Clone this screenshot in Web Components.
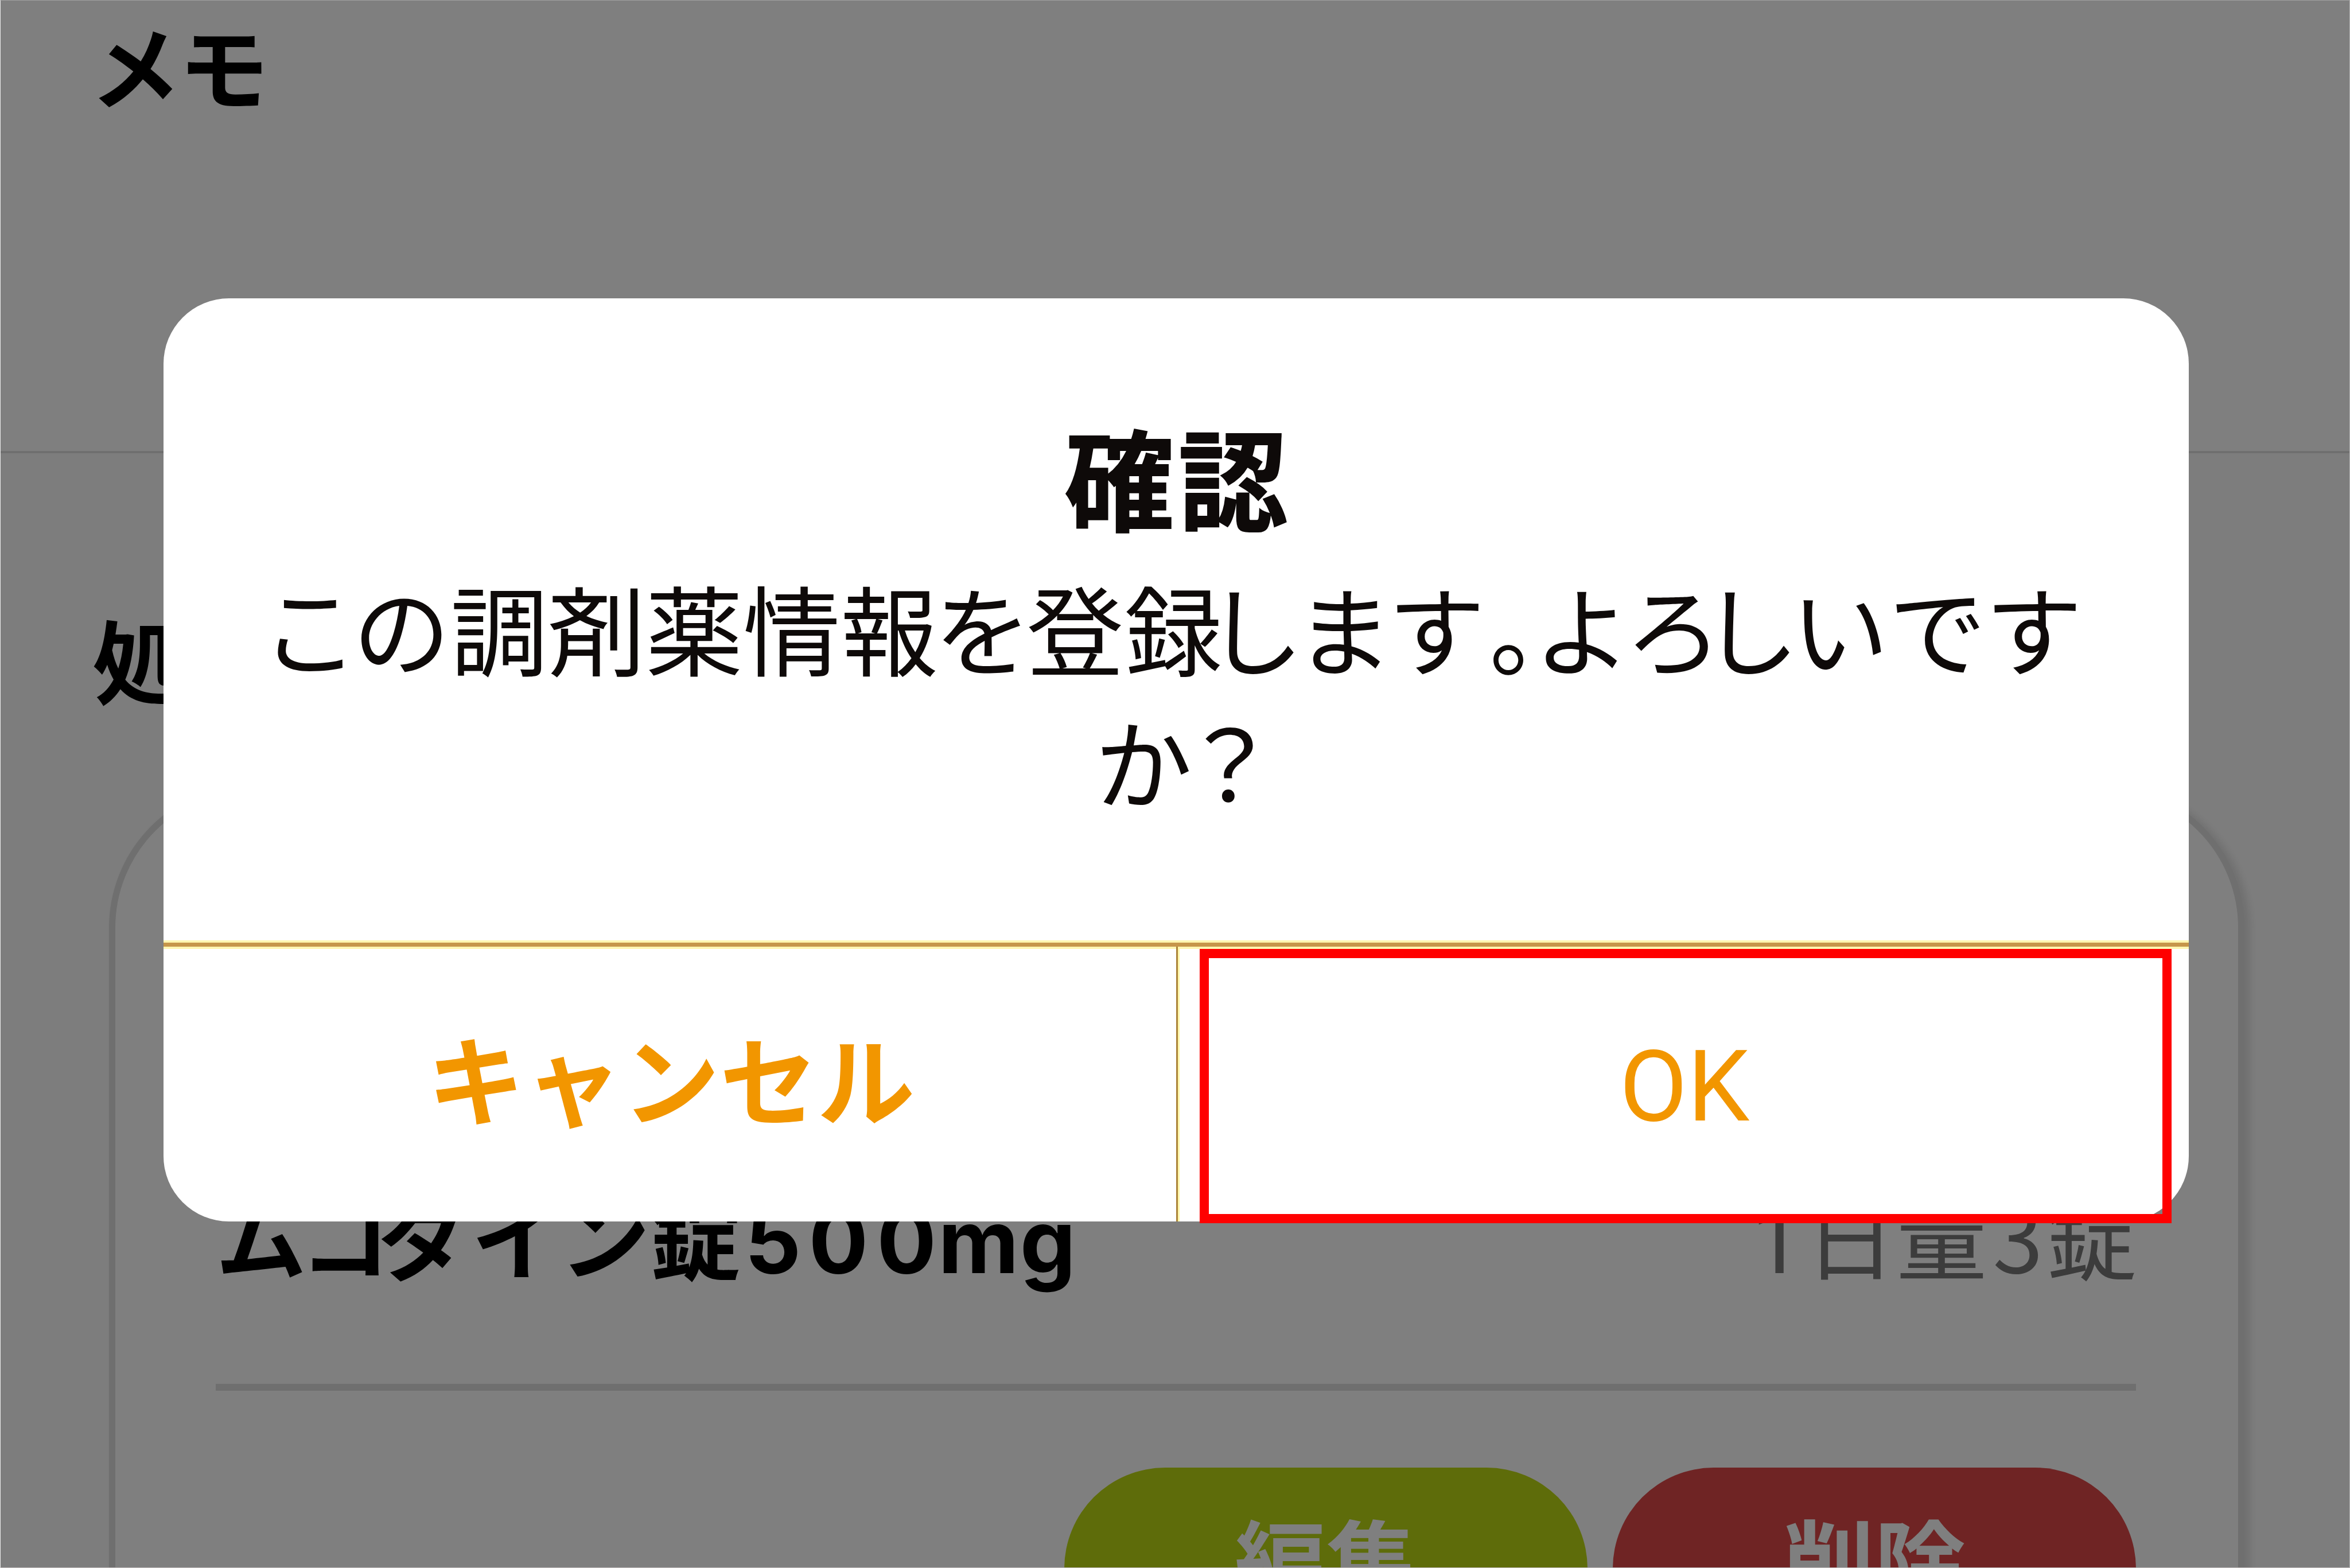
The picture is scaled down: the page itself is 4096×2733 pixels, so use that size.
<!DOCTYPE html>
<html lang="ja">
<head>
    <meta charset="utf-8">
    <title>確認</title>
    <style>
        body {
            margin: 0;
            font-family: "Noto Sans CJK JP", sans-serif;
            color: #000;
        }

        .latin {
            font-family: Inter, sans-serif;
            font-size: 154px;
            font-weight: 650;
        }
    </style>
</head>
<body>
    <prescription-screen>
        <form-section>
            <section-title slot="title"><kern-run by="-4">メ</kern-run>モ</section-title>
        </form-section>
        <form-section shaded>
            <section-title slot="title" style="--indent: 161px">処</section-title>
            <medicine-card>
                <span slot="name"><kern-run by="-12">ム</kern-run><kern-run by="-21">コ</kern-run><kern-run by="5">ダ</kern-run><kern-run by="-5">イ</kern-run>ン<kern-run by="7">錠</kern-run><span class="latin"><kern-run by="13">5</kern-run><kern-run by="15">0</kern-run><kern-run by="3">0</kern-run><kern-run by="2">m</kern-run>g</span></span>
                <span slot="dose"><kern-run by="5" style="font-family: Roboto, sans-serif">1</kern-run><kern-run by="1">日</kern-run><kern-run by="10">量</kern-run><kern-run by="6">3</kern-run>錠</span>
                <pill-button slot="actions" style="--fill: #bcd814">編集</pill-button>
                <pill-button slot="actions" style="--fill: #de4848">削除</pill-button>
            </medicine-card>
        </form-section>
        <confirm-dialog slot="overlay">
            <span slot="title"><kern-run by="7">確</kern-run>認</span>
            <div slot="message" style="padding-right: 15px"><kern-run by="-10">こ</kern-run>の調剤薬情<kern-run by="-7">報</kern-run><kern-run by="-9">を</kern-run><kern-run by="1">登</kern-run><kern-run by="-28">録</kern-run><kern-run by="-14">し</kern-run><kern-run by="-9">ま</kern-run><kern-run by="7">す</kern-run><kern-run by="-93">。</kern-run><kern-run by="-11">よ</kern-run><kern-run by="-36">ろ</kern-run><kern-run by="-14">し</kern-run>い<kern-run by="-2">で</kern-run>す</div>
            <div slot="message" style="padding-left: 36px"><kern-run by="-20">か</kern-run>？</div>
            <dialog-button slot="buttons">キャンセル</dialog-button>
            <dialog-button slot="buttons" primary>OK</dialog-button>
        </confirm-dialog>
    </prescription-screen>

    <script>
        class BaseElement extends HTMLElement {
            constructor() {
                super();
                this.attachShadow({ mode: 'open' });
                this.shadowRoot.innerHTML = this.constructor.template;
            }
        }

        class PrescriptionScreen extends BaseElement {
            static template = `
                <style>
                    :host {
                        display: block;
                        position: relative;
                        height: 2733px;
                        overflow: hidden;
                        background: #fff;
                    }

                    .overlay {
                        position: absolute;
                        inset: 0;
                        box-sizing: border-box;
                        padding: 520px 281px 0 285px;
                        background: rgba(0, 0, 0, 0.5);
                    }

                    .frame {
                        position: absolute;
                        inset: 0;
                        border: 1px solid;
                        border-color: #a0a0a0 #b4b4b4 #c4bebe #ececec;
                    }
                </style>
                <slot></slot>
                <div class="overlay"><slot name="overlay"></slot></div>
                <div class="frame"></div>
            `;
        }

        class FormSection extends BaseElement {
            static template = `
                <style>
                    :host {
                        display: block;
                        box-sizing: border-box;
                        height: 786px;
                        padding-top: 11px;
                    }

                    :host([shaded]) {
                        height: auto;
                        padding-top: 257px;
                        border-top: 4px solid #dedede;
                        background: #fbfbfb;
                    }
                </style>
                <slot name="title"></slot>
                <slot></slot>
            `;
        }

        class SectionTitle extends BaseElement {
            static template = `
                <style>
                    :host {
                        display: block;
                        padding-left: var(--indent, 157px);
                        font-size: 158px;
                        font-weight: 700;
                        line-height: 200px;
                    }
                </style>
                <slot></slot>
            `;
        }

        class MedicineCard extends BaseElement {
            static template = `
                <style>
                    :host {
                        display: block;
                        box-sizing: border-box;
                        height: 1800px;
                        margin: 120px 184px 0 190px;
                        padding: 673px 178px 0 175px;
                        border: 11px solid #dedede;
                        border-radius: 250px;
                        background: #fff;
                        box-shadow: 9px 4px 14px 1px #dfdfdf;
                    }

                    .row {
                        display: flex;
                        justify-content: space-between;
                        align-items: baseline;
                        height: 200px;
                        font-size: 158px;
                        line-height: 200px;
                        white-space: nowrap;
                    }

                    .name {
                        font-weight: 700;
                    }

                    .dose {
                        margin-right: -2px;
                        color: #787878;
                    }

                    hr {
                        height: 12px;
                        margin: 161px 0 134px;
                        border: 0;
                        background: #dedede;
                    }

                    .actions {
                        display: flex;
                        justify-content: flex-end;
                        gap: 44px;
                    }
                </style>
                <div class="row">
                    <div class="name"><slot name="name"></slot></div>
                    <div class="dose"><slot name="dose"></slot></div>
                </div>
                <hr>
                <div class="actions"><slot name="actions"></slot></div>
            `;
        }

        class PillButton extends BaseElement {
            static template = `
                <style>
                    :host {
                        display: block;
                        box-sizing: border-box;
                        width: 912px;
                        height: 352px;
                        padding-top: 57px;
                        border-radius: 176px;
                        background: var(--fill);
                        color: #fff;
                        font-size: 159px;
                        font-weight: 700;
                        line-height: 200px;
                        text-align: center;
                    }
                </style>
                <slot></slot>
            `;
        }

        class ConfirmDialog extends BaseElement {
            static template = `
                <style>
                    :host {
                        display: flex;
                        flex-direction: column;
                        height: 1609px;
                        border-radius: 114px;
                        background: #fff;
                        color: #0e0a09;
                        text-align: center;
                    }

                    .body {
                        height: 1119px;
                        box-sizing: border-box;
                        padding-top: 188px;
                    }

                    .title {
                        height: 268px;
                        font-size: 191px;
                        font-weight: 700;
                        line-height: 240px;
                        -webkit-text-stroke: 2px;
                    }

                    .message {
                        font-size: 170px;
                        line-height: 232px;
                        white-space: nowrap;
                    }

                    .rule {
                        height: 15px;
                        background: linear-gradient(#fff6b0 4px, #c6964a 4px 11px, #fff6b0 11px);
                    }

                    .buttons {
                        display: grid;
                        grid-template-columns: 1765px 1fr;
                        flex: 1;
                    }
                </style>
                <div class="body">
                    <div class="title"><slot name="title"></slot></div>
                    <div class="message"><slot name="message"></slot></div>
                </div>
                <div class="rule"></div>
                <div class="buttons"><slot name="buttons"></slot></div>
            `;
        }

        class DialogButton extends BaseElement {
            static template = `
                <style>
                    :host {
                        display: flex;
                        position: relative;
                        box-sizing: border-box;
                        align-items: center;
                        justify-content: center;
                        padding: 0 0 32px 4px;
                        color: #f29600;
                        font-size: 170px;
                        font-weight: 700;
                        line-height: 240px;
                    }

                    /* Reaches up to the rule so that the divider meets it */
                    :host([primary]) {
                        margin-top: -4px;
                        padding: 8px 0 0 4px;
                        border-left: 3px solid #ab843a;
                        box-shadow: inset 3px 0 #fff6a8;
                        font-family: Roboto, sans-serif;
                        font-size: 172px;
                        font-weight: 400;
                    }

                    .focus {
                        display: none;
                    }

                    :host([primary]) .focus {
                        display: block;
                        position: absolute;
                        inset: 4px 30px -3px 38px;
                        border: 16px solid #f00;
                    }
                </style>
                <slot></slot>
                <div class="focus"></div>
            `;
        }

        // Tightens or loosens the space after its text, in px
        class KernRun extends BaseElement {
            static template = '<style>:host { display: inline; }</style><slot></slot>';

            connectedCallback() {
                this.style.letterSpacing = this.getAttribute('by') + 'px';
            }
        }

        customElements.define('prescription-screen', PrescriptionScreen);
        customElements.define('form-section', FormSection);
        customElements.define('section-title', SectionTitle);
        customElements.define('medicine-card', MedicineCard);
        customElements.define('pill-button', PillButton);
        customElements.define('confirm-dialog', ConfirmDialog);
        customElements.define('dialog-button', DialogButton);
        customElements.define('kern-run', KernRun);
    </script>
</body>
</html>
